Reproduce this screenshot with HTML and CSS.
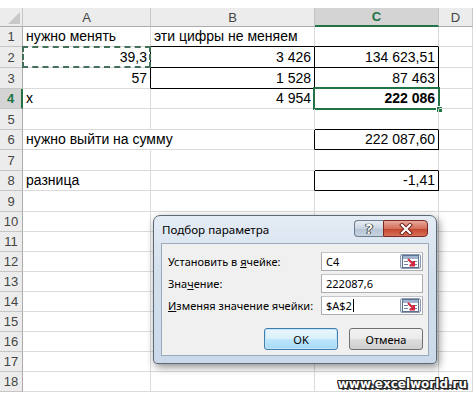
FILE: index.html
```html
<!DOCTYPE html>
<html lang="ru">
<head>
  <meta charset="UTF-8" />
  <title>Подбор параметра</title>
  <link rel="stylesheet" href="styles.css">
</head>
<body>
  <div class="screen">
    <div class="sheet">
      <div class="row hdr">
        <div class="corner"><span class="tri"></span></div>
        <div class="ch">A</div><div class="ch">B</div><div class="ch on">C</div><div class="ch">D</div>
      </div>
      <div class="row h20">
        <div class="rh">1</div><div class="c">нужно менять</div><div class="c xb">эти цифры не меняем</div><div class="c xb"></div><div class="c"></div>
      </div>
      <div class="row h21">
        <div class="rh">2</div><div class="c num xr">39,3<span class="marq"></span></div><div class="c num xr xb">3 426</div><div class="c num xr xb">134 623,51</div><div class="c"></div>
      </div>
      <div class="row h21">
        <div class="rh">3</div><div class="c num xr">57</div><div class="c num xr xb">1 528</div><div class="c num xr xb">87 463</div><div class="c"></div>
      </div>
      <div class="row h20">
        <div class="rh on">4</div><div class="c">x</div><div class="c num">4 954</div><div class="c num bold">222 086<span class="selbox"><span class="handle"></span></span></div><div class="c"></div>
      </div>
      <div class="row h21">
        <div class="rh">5</div><div class="c"></div><div class="c"></div><div class="c xb"></div><div class="c"></div>
      </div>
      <div class="row h20">
        <div class="rh">6</div><div class="c spill">нужно выйти на сумму</div><div class="c xr"></div><div class="c num xr xb">222 087,60</div><div class="c"></div>
      </div>
      <div class="row h21">
        <div class="rh">7</div><div class="c"></div><div class="c"></div><div class="c xb"></div><div class="c"></div>
      </div>
      <div class="row h20">
        <div class="rh">8</div><div class="c">разница</div><div class="c xr"></div><div class="c num xr xb">-1,41</div><div class="c"></div>
      </div>
      <div class="row h21"><div class="rh">9</div><div class="c"></div><div class="c"></div><div class="c"></div><div class="c"></div></div>
      <div class="row h20"><div class="rh">10</div><div class="c"></div><div class="c"></div><div class="c"></div><div class="c"></div></div>
      <div class="row h20"><div class="rh">11</div><div class="c"></div><div class="c"></div><div class="c"></div><div class="c"></div></div>
      <div class="row h20"><div class="rh">12</div><div class="c"></div><div class="c"></div><div class="c"></div><div class="c"></div></div>
      <div class="row h20"><div class="rh">13</div><div class="c"></div><div class="c"></div><div class="c"></div><div class="c"></div></div>
      <div class="row h20"><div class="rh">14</div><div class="c"></div><div class="c"></div><div class="c"></div><div class="c"></div></div>
      <div class="row h20"><div class="rh">15</div><div class="c"></div><div class="c"></div><div class="c"></div><div class="c"></div></div>
      <div class="row h20"><div class="rh">16</div><div class="c"></div><div class="c"></div><div class="c"></div><div class="c"></div></div>
      <div class="row h20"><div class="rh">17</div><div class="c"></div><div class="c"></div><div class="c"></div><div class="c"></div></div>
      <div class="row h20"><div class="rh">18</div><div class="c"></div><div class="c"></div><div class="c"></div><div class="c"></div></div>
    </div>

    <div class="dlg">
      <div class="dlg-title">
        <span class="dlg-caption">Подбор параметра</span>
        <div class="dlg-btns">
          <div class="tb help">?</div>
          <div class="tb close">
            <svg width="14" height="12" viewBox="0 0 14 12">
              <path d="M3 2 L11 10 M11 2 L3 10" stroke="#6b1d14" stroke-width="4" stroke-linecap="square"/>
              <path d="M3 2 L11 10 M11 2 L3 10" stroke="#fff" stroke-width="2.2" stroke-linecap="square"/>
            </svg>
          </div>
        </div>
      </div>
      <div class="dlg-body">
        <div class="field">
          <span class="lbl">Установить в <u>я</u>чейке:</span>
          <div class="inp">C4<span class="refbtn"><svg width="17" height="13" viewBox="0 0 17 13"><rect x="0.5" y="0.5" width="16" height="12" fill="#fff" stroke="#5b7391"/><rect x="1" y="1" width="15" height="3" fill="#9fb4cf"/><path d="M2 6.5h4M2 9.5h4M8 6.5h7M8 9.5h7" stroke="#6b829f"/><path d="M6 4 L12 10 M12 6 V10.5 H7.5" stroke="#d8243a" stroke-width="2" fill="none"/></svg></span></div>
        </div>
        <div class="field">
          <span class="lbl">Зна<u>ч</u>ение:</span>
          <div class="inp">222087,6</div>
        </div>
        <div class="field">
          <span class="lbl"><u>И</u>зменяя значение ячейки:</span>
          <div class="inp">$A$2<span class="caret"></span><span class="refbtn"><svg width="17" height="13" viewBox="0 0 17 13"><rect x="0.5" y="0.5" width="16" height="12" fill="#fff" stroke="#5b7391"/><rect x="1" y="1" width="15" height="3" fill="#9fb4cf"/><path d="M2 6.5h4M2 9.5h4M8 6.5h7M8 9.5h7" stroke="#6b829f"/><path d="M6 4 L12 10 M12 6 V10.5 H7.5" stroke="#d8243a" stroke-width="2" fill="none"/></svg></span></div>
        </div>
        <div class="actions">
          <div class="btn def">OK</div>
          <div class="btn">Отмена</div>
        </div>
      </div>
    </div>

    <div class="wm">www.excelworld.ru</div>
  </div>
</body>
</html>
```

FILE: styles.css
```css
:root {
  --grid: #dadada;
  --head-bg: #ececec;
  --head-sel: #d4d4d4;
  --excel-green: #217346;
  --dlg-face: #f0f0f0;
}

* {
  box-sizing: border-box;
  margin: 0;
  padding: 0;
}

body {
  width: 473px;
  height: 394px;
  overflow: hidden;
  background: #fff;
  font-family: "Liberation Sans", Arial, sans-serif;
  color: #000;
}

.screen {
  position: relative;
  height: 394px;
  padding-top: 8px;
}

/* sheet */

.sheet {
  font-size: 14px;
}

.row {
  display: grid;
  grid-template-columns: 23px 128px 164px 124px 34px;
}

.hdr { height: 19px; }
.h20 { height: 20px; }
.h21 { height: 21px; }

.corner {
  position: relative;
  background: var(--head-bg);
  border-right: 1px solid #c6c6c6;
  border-bottom: 1px solid #ababab;
}

.tri {
  position: absolute;
  right: 2px;
  bottom: 2px;
  width: 0;
  height: 0;
  border-left: 12px solid transparent;
  border-bottom: 12px solid #c8c8c8;
}

.ch {
  display: flex;
  align-items: center;
  justify-content: center;
  background: var(--head-bg);
  color: #444;
  font-size: 13px;
  border-right: 1px solid #c6c6c6;
  border-bottom: 1px solid #ababab;
}

.ch.on {
  background: var(--head-sel);
  color: var(--excel-green);
  font-weight: bold;
  border-bottom: 2px solid var(--excel-green);
}

.rh {
  display: flex;
  align-items: center;
  justify-content: center;
  background: var(--head-bg);
  color: #444;
  font-size: 13px;
  border-right: 1px solid #ababab;
  border-bottom: 1px solid #c6c6c6;
}

.rh.on {
  background: var(--head-sel);
  color: var(--excel-green);
  font-weight: bold;
  border-right: 2px solid var(--excel-green);
}

.c {
  position: relative;
  display: flex;
  align-items: flex-end;
  padding: 0 3px 2px 3px;
  white-space: nowrap;
  border-right: 1px solid var(--grid);
  border-bottom: 1px solid var(--grid);
}

.c.num { justify-content: flex-end; }
.c.bold { font-weight: bold; }
.c.spill { border-right-color: #fff; }
.c.xr { border-right-color: #000; }
.c.xb { border-bottom-color: #000; }

.marq {
  position: absolute;
  left: -1px;
  top: -1px;
  right: -1px;
  bottom: -1px;
  border: 2px dashed #44705a;
}

.selbox {
  position: absolute;
  left: -2px;
  top: -2px;
  right: -2px;
  bottom: -2px;
  border: 2px solid var(--excel-green);
}

.handle {
  position: absolute;
  right: -5px;
  bottom: -5px;
  width: 7px;
  height: 7px;
  background: var(--excel-green);
  border: 1px solid #fff;
}

/* dialog */

.dlg {
  position: absolute;
  left: 153px;
  top: 215px;
  width: 284px;
  height: 149px;
  display: flex;
  flex-direction: column;
  padding: 0 7px 7px 7px;
  border: 1px solid #5d6977;
  border-radius: 7px 7px 4px 4px;
  background: linear-gradient(#e4ecf5, #d3dfec 40%, #cad9ea);
  box-shadow: 2px 3px 8px rgba(0,0,0,0.45);
  font-family: "Noto Sans", "Open Sans", sans-serif;
  font-size: 11px;
}

.dlg-title {
  height: 27px;
  display: flex;
  align-items: flex-start;
  justify-content: space-between;
}

.dlg-caption {
  margin-top: 6px;
  margin-left: 1px;
  font-size: 11.6px;
  color: #000;
}

.dlg-btns {
  display: flex;
  margin-top: 4px;
  margin-right: 1px;
}

.tb {
  height: 17px;
  display: flex;
  align-items: center;
  justify-content: center;
  border: 1px solid #6c7b8d;
}

.help {
  width: 29px;
  border-radius: 4px 0 0 4px;
  border-right: none;
  background: linear-gradient(#e9eef4, #c9d4e1 50%, #b5c3d4 51%, #c7d3e0);
  color: #fff;
  font-weight: bold;
  font-size: 14px;
  text-shadow: 0 0 1px #333, 0 0 1px #333, 1px 0 0 #444, -1px 0 0 #444;
}

.close {
  width: 45px;
  border-radius: 0 4px 4px 0;
  border-color: #7a2a20;
  background: linear-gradient(#e9a99c, #d16f5b 50%, #c2432c 51%, #d8705a);
}

.dlg-body {
  flex: 1;
  display: flex;
  flex-direction: column;
  gap: 3px;
  padding: 8px 5px 0 6px;
  background: var(--dlg-face);
  border: 1px solid #9aaabd;
}

.field {
  height: 19px;
  display: flex;
  align-items: center;
  justify-content: space-between;
}

.lbl {
  color: #000;
  white-space: nowrap;
}

.inp {
  position: relative;
  width: 102px;
  height: 19px;
  display: flex;
  align-items: center;
  padding-left: 4px;
  background: #fff;
  border: 1px solid #abadb3;
  border-top-color: #c4c6cc;
}

.caret {
  width: 1px;
  height: 13px;
  background: #000;
  margin-left: 1px;
}

.refbtn {
  position: absolute;
  right: 1px;
  top: 1px;
  width: 21px;
  height: 15px;
  display: flex;
  align-items: center;
  justify-content: center;
  border: 1px solid #8c9bae;
  border-radius: 2px;
  background: linear-gradient(#fafafa, #dfe4ea);
}

.actions {
  display: flex;
  justify-content: flex-end;
  gap: 11px;
  margin-top: 10px;
}

.btn {
  width: 74px;
  height: 22px;
  display: flex;
  align-items: center;
  justify-content: center;
  border: 1px solid #707070;
  border-radius: 3px;
  background: linear-gradient(#f2f2f2, #ebebeb 50%, #dddddd 51%, #cfcfcf);
  color: #000;
}

.btn.def {
  border-color: #3c7fb1;
  box-shadow: inset 0 0 0 1px #c6e3f7;
  background: linear-gradient(#eaf6fd, #d9f0fc 50%, #bee6fd 51%, #a7d9f5);
}

/* watermark */

.wm {
  position: absolute;
  right: 6px;
  bottom: 3px;
  font-family: "DejaVu Sans", sans-serif;
  font-weight: bold;
  font-size: 12px;
  color: #fff;
  text-shadow: 1px 0 0 #222, -1px 0 0 #222, 0 1px 0 #222, 0 -1px 0 #222, 1px 1px 0 #222, -1px -1px 0 #222, 1px -1px 0 #222, -1px 1px 0 #222, 2px 2px 0 #555;
}
```
